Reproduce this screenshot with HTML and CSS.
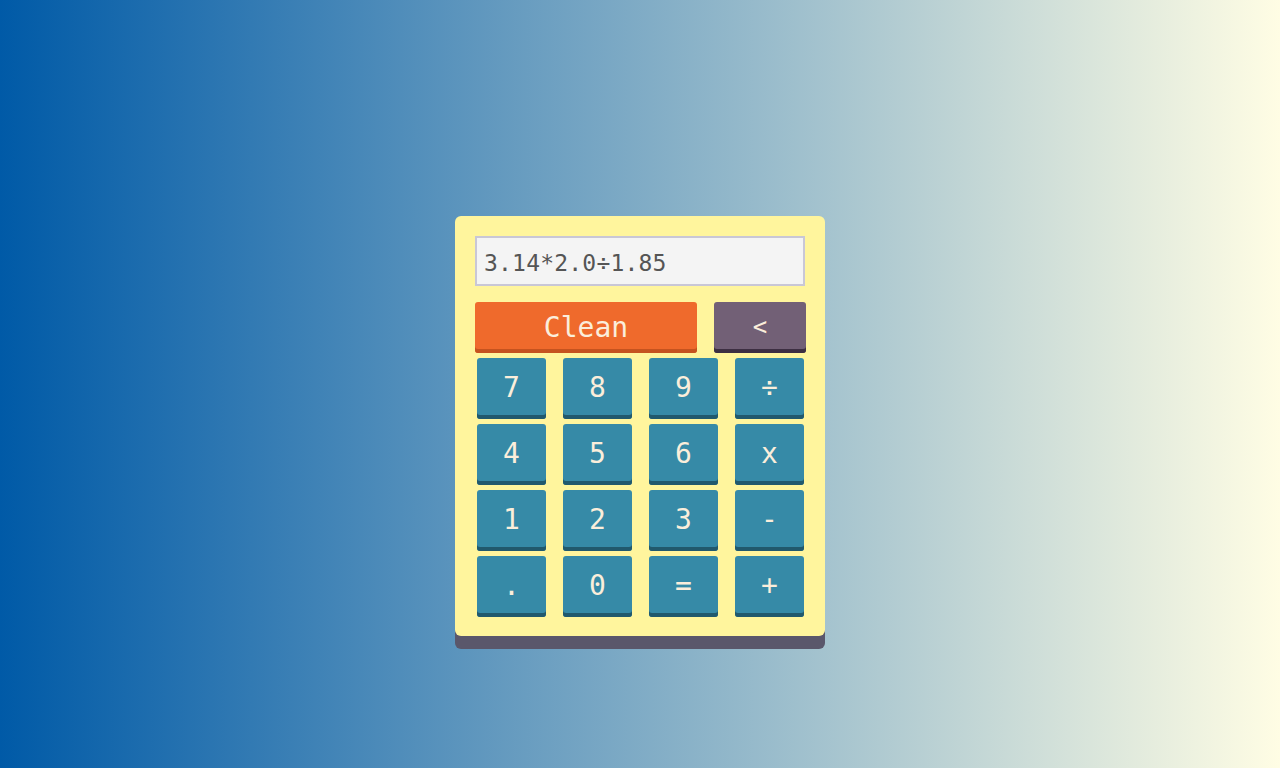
FILE: index.html
```html
<!DOCTYPE html>
<html>
<head>
<meta charset="utf-8">
<link rel="stylesheet" href="styles.css">
</head>
<body>
<div class="page">
  <div class="calc">
    <div class="display">3.14*2.0÷1.85</div>
    <div class="top-row">
      <button class="btn clean">Clean</button>
      <button class="btn back">&lt;</button>
    </div>
    <div class="keys">
      <button class="btn key">7</button>
      <button class="btn key">8</button>
      <button class="btn key">9</button>
      <button class="btn key">÷</button>
      <button class="btn key">4</button>
      <button class="btn key">5</button>
      <button class="btn key">6</button>
      <button class="btn key">x</button>
      <button class="btn key">1</button>
      <button class="btn key">2</button>
      <button class="btn key">3</button>
      <button class="btn key">-</button>
      <button class="btn key">.</button>
      <button class="btn key">0</button>
      <button class="btn key">=</button>
      <button class="btn key">+</button>
    </div>
  </div>
</div>
</body>
</html>
```

FILE: styles.css
```css
* { box-sizing: border-box; }
html, body { margin: 0; padding: 0; height: 100%; }
body {
  font-family: "DejaVu Sans Mono", "Liberation Mono", monospace;
  background: linear-gradient(to right, #005aa7, #fffde4);
}
.page {
  height: 768px;
  display: flex;
  justify-content: center;
  align-items: flex-start;
  padding-top: 216px;
}
.calc {
  width: 370px;
  height: 420px;
  background: #fff59d;
  border-radius: 6px;
  box-shadow: 0 13px 0 #5a576b;
  padding: 20px;
}
.display {
  height: 50px;
  background: #f4f4f4;
  border: 2px solid #c9c7d6;
  font-size: 23px;
  letter-spacing: 0.2px;
  color: #555;
  line-height: 50px;
  padding-left: 7px;
}
.btn {
  border: none;
  border-radius: 3px;
  font-family: "DejaVu Sans Mono", "Liberation Mono", monospace;
  color: #fbeedb;
  padding: 0;
  cursor: pointer;
}
.top-row {
  display: flex;
  gap: 17px;
  margin-top: 16px;
  height: 51px;
}
.clean {
  width: 222px;
  height: 51px;
  background: #ef6a2c;
  box-shadow: inset 0 -4px 0 #c5531f;
  font-size: 28px;
  padding-bottom: 1px;
}
.back {
  width: 92px;
  height: 51px;
  background: #726076;
  box-shadow: inset 0 -4px 0 #3d2f42;
  font-size: 24px;
  padding-bottom: 1px;
  margin-right: -1px;
}
.keys {
  display: grid;
  grid-template-columns: repeat(4, 69px);
  grid-auto-rows: 61px;
  column-gap: 17px;
  row-gap: 5px;
  margin: 5px 0 0 2px;
}
.key {
  background: #368aa7;
  box-shadow: inset 0 -4px 0 #21596d;
  font-size: 28px;
  padding-bottom: 3px;
}
```
